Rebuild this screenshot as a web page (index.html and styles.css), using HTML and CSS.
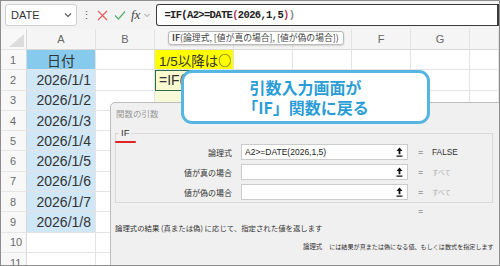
FILE: index.html
```html
<!DOCTYPE html>
<html lang="ja">
<head>
  <meta charset="UTF-8" />
  <title>IF 関数の引数</title>
  <link rel="stylesheet" href="styles.css">
</head>
<body>
  <div class="frame">

    <div class="formula-bar">
      <div class="name-box">
        <span>DATE</span>
        <svg width="8" height="6" viewBox="0 0 8 6"><path d="M1 1.5 L4 4.5 L7 1.5" fill="none" stroke="#555" stroke-width="1.1"/></svg>
      </div>
      <span class="dots">⋮</span>
      <svg class="fb-icon" width="11" height="11" viewBox="0 0 11 11"><path d="M1 1 L10 10 M10 1 L1 10" stroke="#e0605e" stroke-width="1.2"/></svg>
      <svg class="fb-icon" width="12" height="10" viewBox="0 0 12 10"><path d="M1 5.5 L4.5 9 L11 1.5" fill="none" stroke="#5aae6c" stroke-width="1.2"/></svg>
      <span class="fx">fx</span>
      <svg class="fx-chev" width="6" height="5" viewBox="0 0 6 5"><path d="M0.5 1 L3 3.5 L5.5 1" fill="none" stroke="#888" stroke-width="0.9"/></svg>
      <div class="formula-input">=IF(A2&gt;=DATE<span class="p1">(</span>2026,1,5<span class="p1">)</span><span class="p0">)</span></div>
    </div>

    <div class="sheet">
      <div class="row head">
        <div class="rh corner"><span class="tri"></span></div>
        <div class="c">A</div><div class="c">B</div><div class="c"></div><div class="c"></div>
        <div class="c"></div><div class="c">F</div><div class="c">G</div><div class="c"></div>
      </div>
      <div class="row">
        <div class="rh">1</div><div class="c date-head">日付</div><div class="c"></div>
        <div class="c yellow">1/5以降は<span class="circle">○</span></div><div class="c"></div><div class="c"></div><div class="c"></div><div class="c"></div><div class="c"></div>
      </div>
      <div class="row">
        <div class="rh">2</div><div class="c date">2026/1/1</div><div class="c"></div>
        <div class="c editing">=IF(</div><div class="c"></div><div class="c"></div><div class="c"></div><div class="c"></div><div class="c"></div>
      </div>
      <div class="row">
        <div class="rh">3</div><div class="c date">2026/1/2</div><div class="c"></div>
        <div class="c pale"></div><div class="c"></div><div class="c"></div><div class="c"></div><div class="c"></div><div class="c"></div>
      </div>
      <div class="row">
        <div class="rh">4</div><div class="c date">2026/1/3</div><div class="c"></div>
        <div class="c"></div><div class="c"></div><div class="c"></div><div class="c"></div><div class="c"></div><div class="c"></div>
      </div>
      <div class="row">
        <div class="rh">5</div><div class="c date">2026/1/4</div><div class="c"></div>
        <div class="c"></div><div class="c"></div><div class="c"></div><div class="c"></div><div class="c"></div><div class="c"></div>
      </div>
      <div class="row">
        <div class="rh">6</div><div class="c date">2026/1/5</div><div class="c"></div>
        <div class="c"></div><div class="c"></div><div class="c"></div><div class="c"></div><div class="c"></div><div class="c"></div>
      </div>
      <div class="row">
        <div class="rh">7</div><div class="c date">2026/1/6</div><div class="c"></div>
        <div class="c"></div><div class="c"></div><div class="c"></div><div class="c"></div><div class="c"></div><div class="c"></div>
      </div>
      <div class="row">
        <div class="rh">8</div><div class="c date">2026/1/7</div><div class="c"></div>
        <div class="c"></div><div class="c"></div><div class="c"></div><div class="c"></div><div class="c"></div><div class="c"></div>
      </div>
      <div class="row">
        <div class="rh">9</div><div class="c date">2026/1/8</div><div class="c"></div>
        <div class="c"></div><div class="c"></div><div class="c"></div><div class="c"></div><div class="c"></div><div class="c"></div>
      </div>
      <div class="row">
        <div class="rh">10</div><div class="c"></div><div class="c"></div>
        <div class="c"></div><div class="c"></div><div class="c"></div><div class="c"></div><div class="c"></div><div class="c"></div>
      </div>
      <div class="row">
        <div class="rh">11</div><div class="c"></div><div class="c"></div>
        <div class="c"></div><div class="c"></div><div class="c"></div><div class="c"></div><div class="c"></div><div class="c"></div>
      </div>
    </div>

    <div class="tooltip"><b>IF</b>(論理式, [値が真の場合], [値が偽の場合])</div>

    <div class="dialog">
      <div class="dlg-title">関数の引数</div>
      <fieldset class="group">
        <legend>IF</legend>
        <div class="arg-row">
          <label>論理式</label>
          <div class="arg-input"><span>A2&gt;=DATE(2026,1,5)</span><i class="collapse"><svg width="7" height="10" viewBox="0 0 7 10"><path d="M3.5 0.5 L6.5 4 H4.4 V7.2 H2.6 V4 H0.5 Z M0.5 8.4 H6.5 V9.8 H0.5 Z" fill="#111"/></svg></i></div>
          <span class="eq">=</span><span class="val">FALSE</span>
        </div>
        <div class="arg-row">
          <label>値が真の場合</label>
          <div class="arg-input"><span></span><i class="collapse"><svg width="7" height="10" viewBox="0 0 7 10"><path d="M3.5 0.5 L6.5 4 H4.4 V7.2 H2.6 V4 H0.5 Z M0.5 8.4 H6.5 V9.8 H0.5 Z" fill="#111"/></svg></i></div>
          <span class="eq">=</span><span class="val muted">すべて</span>
        </div>
        <div class="arg-row">
          <label>値が偽の場合</label>
          <div class="arg-input"><span></span><i class="collapse"><svg width="7" height="10" viewBox="0 0 7 10"><path d="M3.5 0.5 L6.5 4 H4.4 V7.2 H2.6 V4 H0.5 Z M0.5 8.4 H6.5 V9.8 H0.5 Z" fill="#111"/></svg></i></div>
          <span class="eq">=</span><span class="val muted">すべて</span>
        </div>
      </fieldset>
      <div class="result-row"><span class="eq">=</span></div>
      <p class="desc">論理式の結果 (真または偽) に応じて、指定された値を返します</p>
      <p class="desc-arg"><span class="arg-name">論理式</span>には結果が真または偽になる値、もしくは数式を指定します</p>
      <span class="red-mark"></span>
    </div>

    <div class="callout">
      <div>引数入力画面が</div>
      <div>「IF」関数に戻る</div>
    </div>

  </div>
</body>
</html>
```

FILE: styles.css
```css
* {
  box-sizing: border-box;
  margin: 0;
  padding: 0;
}

body {
  background: #fff;
  font-family: 'Liberation Sans', 'Noto Sans CJK JP', sans-serif;
  color: #222;
}

.frame {
  position: relative;
  width: 500px;
  height: 266px;
  overflow: hidden;
  border: 1px solid #8e8e8e;
  background: #fff;
}

/* formula bar */

.formula-bar {
  display: flex;
  align-items: center;
  height: 28px;
  padding-left: 4px;
  background: #f3f3f3;
}

.name-box {
  display: flex;
  align-items: center;
  justify-content: space-between;
  width: 72px;
  height: 22px;
  padding: 0 4px 0 5px;
  background: #fff;
  border: 1px solid #cfcfcf;
  border-radius: 3px;
  font-size: 11px;
  color: #333;
}

.dots {
  width: 14px;
  margin-left: 2px;
  text-align: center;
  font-size: 11px;
  color: #555;
}

.fb-icon {
  margin-left: 4px;
  margin-right: 2px;
}

.fx {
  margin-left: 3px;
  font-family: 'Liberation Serif', serif;
  font-style: italic;
  font-size: 13px;
  color: #444;
}

.fx-chev {
  margin-left: 4px;
}

.formula-input {
  flex: 1;
  height: 22px;
  margin-left: 6px;
  padding-left: 7px;
  display: flex;
  align-items: center;
  background: #fff;
  border: 1.5px solid #3a3a3a;
  border-right-width: 2px;
  border-radius: 3px 0 0 3px;
  font-family: 'Liberation Mono', monospace;
  font-weight: bold;
  font-size: 10.5px;
  letter-spacing: -0.65px;
  color: #222;
}

.formula-input .p1 {
  color: #b23a5a;
}

.formula-input .p0 {
  color: #8a8a8a;
}

/* sheet */

.row {
  display: grid;
  grid-template-columns: 26px 69px 59px 79px 59px 59px 59px 59px 1fr;
  height: 20.3px;
}

.row.head {
  height: 21px;
  background: #f5f5f5;
}

.rh {
  display: flex;
  align-items: center;
  padding-left: 9px;
  background: #f8f8f8;
  border-right: 1px solid #d8d8d8;
  border-bottom: 1px solid #e6e6e6;
  font-size: 11px;
  color: #6a6a6a;
}

.row.head .c {
  display: flex;
  align-items: center;
  justify-content: center;
  border-right: 1px solid #e3e3e3;
  border-bottom: 1px solid #d8d8d8;
  font-size: 11px;
  color: #666;
}

.corner {
  position: relative;
}

.tri {
  position: absolute;
  right: 2px;
  bottom: 2px;
  width: 0;
  height: 0;
  border-left: 15px solid transparent;
  border-bottom: 13px solid #dcdcdc;
}

.c {
  border-right: 1px solid #e3e3e3;
  border-bottom: 1px solid #e3e3e3;
  display: flex;
  align-items: center;
  font-size: 14px;
  color: #333;
  white-space: nowrap;
  overflow: hidden;
}

.date-head {
  justify-content: center;
  background: #86cbee;
}

.date {
  justify-content: flex-end;
  padding-right: 4px;
  background: #cfe7f7;
}

.yellow {
  padding-left: 4px;
  background: #ffff00;
  font-size: 13.5px;
}

.circle {
  font-family: 'Noto Sans CJK JP', sans-serif;
  font-size: 13px;
}

.editing {
  padding-left: 3px;
  background: #fbf9d0;
  border: 1.5px solid #2f6b4a;
}

.pale {
  background: #f7f9d8;
}

/* tooltip */

.tooltip {
  position: absolute;
  left: 167px;
  top: 30px;
  height: 14px;
  padding: 0 4px 0 3px;
  line-height: 12px;
  background: #fff;
  border: 1px solid #b9b9b9;
  border-radius: 3px;
  box-shadow: 0 1px 2px rgba(0, 0, 0, 0.15);
  font-family: 'Noto Sans CJK JP', sans-serif;
  font-size: 8.8px;
  color: #444;
  white-space: nowrap;
  z-index: 2;
}

/* function arguments dialog */

.dialog {
  position: absolute;
  left: 109px;
  top: 101px;
  width: 396px;
  height: 170px;
  padding-left: 4px;
  background: #f0f0f0;
  border: 1px solid #bcbcbc;
  border-radius: 5px 0 0 0;
  font-family: 'Noto Sans CJK JP', sans-serif;
  z-index: 3;
}

.dlg-title {
  height: 20px;
  line-height: 20px;
  padding-left: 1px;
  font-size: 8.5px;
  color: #9a9a9a;
}

.group {
  width: 378px;
  margin-top: 3px;
  padding: 2px 0 0 0;
  border: 1px solid #dadada;
}

.group legend {
  margin-left: 3px;
  padding: 0 2px;
  line-height: 14px;
  font-family: 'Liberation Sans', sans-serif;
  font-size: 9.5px;
  color: #333;
}

.arg-row {
  display: flex;
  align-items: center;
  height: 20px;
}

.arg-row label {
  width: 116px;
  margin-right: 9px;
  text-align: right;
  font-size: 8px;
  color: #333;
}

.arg-input {
  display: flex;
  align-items: center;
  justify-content: space-between;
  width: 167px;
  height: 16px;
  background: #fff;
  border: 1px solid #cbcbcb;
}

.arg-input span {
  padding-left: 3px;
  font-family: 'Liberation Sans', sans-serif;
  font-size: 8.5px;
  color: #222;
}

.collapse {
  display: flex;
  align-items: center;
  justify-content: center;
  width: 15px;
  height: 14px;
}

.eq {
  width: 8px;
  margin-left: 10px;
  font-family: 'Liberation Sans', sans-serif;
  font-size: 9px;
  color: #666;
}

.val {
  margin-left: 6px;
  font-family: 'Liberation Sans', sans-serif;
  font-size: 8.3px;
  color: #333;
}

.val.muted {
  font-family: 'Noto Sans CJK JP', sans-serif;
  font-size: 6.5px;
  color: #b0b0b0;
}

.result-row {
  display: flex;
  align-items: center;
  height: 16px;
  padding-left: 293px;
}

.desc {
  margin-top: 2px;
  line-height: 14px;
  font-size: 7.4px;
  color: #333;
  white-space: nowrap;
}

.desc-arg {
  margin-top: 5px;
  padding-left: 188px;
  line-height: 14px;
  font-size: 6.1px;
  color: #333;
  white-space: nowrap;
}

.arg-name {
  margin-right: 7px;
  font-size: 6.4px;
}

.red-mark {
  position: absolute;
  left: 4px;
  top: 38px;
  width: 21px;
  height: 2px;
  border-radius: 1px;
  background: #e02424;
}

/* annotation */

.callout {
  position: absolute;
  left: 180px;
  top: 69px;
  width: 249px;
  height: 54px;
  display: flex;
  flex-direction: column;
  justify-content: center;
  align-items: center;
  background: #fff;
  border: 3px solid #55b6e2;
  border-radius: 11px;
  font-family: 'Noto Sans CJK JP', sans-serif;
  font-weight: bold;
  font-size: 16px;
  line-height: 20px;
  color: #2b9dd6;
  z-index: 4;
}
```
